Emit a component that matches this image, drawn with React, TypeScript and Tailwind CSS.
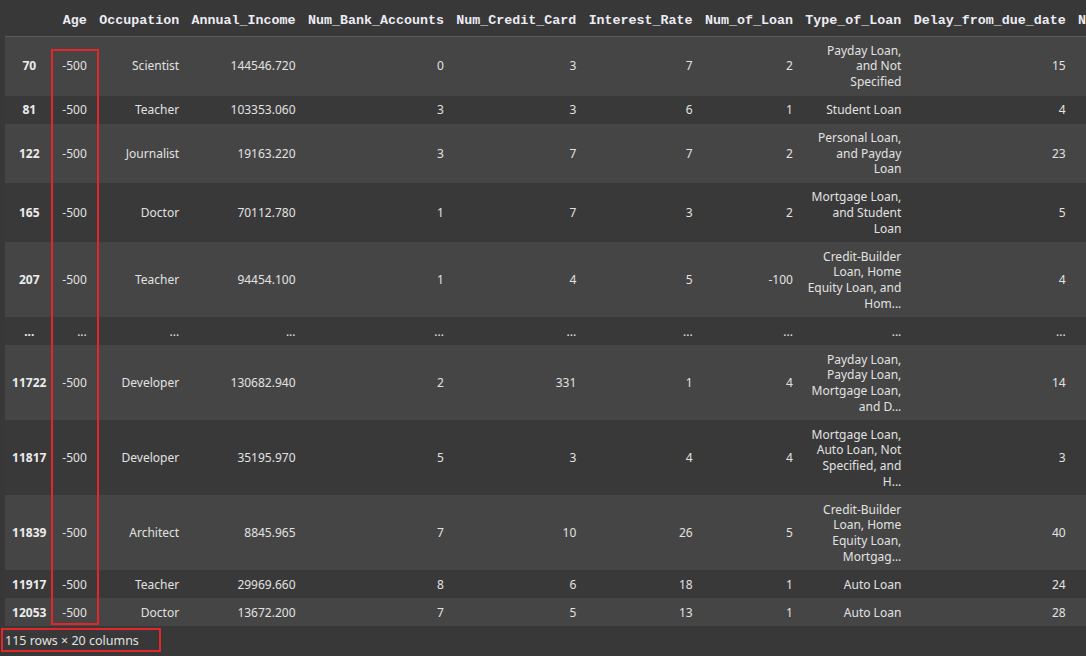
import React from "react";

type Row = {
  idx: string;
  age: string;
  occ: string;
  inc: string;
  bank: string;
  cc: string;
  rate: string;
  loans: string;
  type: string[];
  delay: string;
  ndp: string;
};

const rows: Row[] = [
  { idx: "70", age: "-500", occ: "Scientist", inc: "144546.720", bank: "0", cc: "3", rate: "7", loans: "2", type: ["Payday Loan,", "and Not", "Specified"], delay: "15", ndp: "11" },
  { idx: "81", age: "-500", occ: "Teacher", inc: "103353.060", bank: "3", cc: "3", rate: "6", loans: "1", type: ["Student Loan"], delay: "4", ndp: "1" },
  { idx: "122", age: "-500", occ: "Journalist", inc: "19163.220", bank: "3", cc: "7", rate: "7", loans: "2", type: ["Personal Loan,", "and Payday", "Loan"], delay: "23", ndp: "16" },
  { idx: "165", age: "-500", occ: "Doctor", inc: "70112.780", bank: "1", cc: "7", rate: "3", loans: "2", type: ["Mortgage Loan,", "and Student", "Loan"], delay: "5", ndp: "4" },
  { idx: "207", age: "-500", occ: "Teacher", inc: "94454.100", bank: "1", cc: "4", rate: "5", loans: "-100", type: ["Credit-Builder", "Loan, Home", "Equity Loan, and", "Hom..."], delay: "4", ndp: "6" },
  { idx: "...", age: "...", occ: "...", inc: "...", bank: "...", cc: "...", rate: "...", loans: "...", type: ["..."], delay: "...", ndp: "..." },
  { idx: "11722", age: "-500", occ: "Developer", inc: "130682.940", bank: "2", cc: "331", rate: "1", loans: "4", type: ["Payday Loan,", "Payday Loan,", "Mortgage Loan,", "and D..."], delay: "14", ndp: "9" },
  { idx: "11817", age: "-500", occ: "Developer", inc: "35195.970", bank: "5", cc: "3", rate: "4", loans: "4", type: ["Mortgage Loan,", "Auto Loan, Not", "Specified, and", "H..."], delay: "3", ndp: "8" },
  { idx: "11839", age: "-500", occ: "Architect", inc: "8845.965", bank: "7", cc: "10", rate: "26", loans: "5", type: ["Credit-Builder", "Loan, Home", "Equity Loan,", "Mortgag..."], delay: "40", ndp: "19" },
  { idx: "11917", age: "-500", occ: "Teacher", inc: "29969.660", bank: "8", cc: "6", rate: "18", loans: "1", type: ["Auto Loan"], delay: "24", ndp: "17" },
  { idx: "12053", age: "-500", occ: "Doctor", inc: "13672.200", bank: "7", cc: "5", rate: "13", loans: "1", type: ["Auto Loan"], delay: "28", ndp: "14" },
];

const headers = [
  "Age",
  "Occupation",
  "Annual_Income",
  "Num_Bank_Accounts",
  "Num_Credit_Card",
  "Interest_Rate",
  "Num_of_Loan",
  "Type_of_Loan",
  "Delay_from_due_date",
  "Num_of_Delayed_Payment",
];

const td =
  "px-[6.2px] py-[6.17px] leading-[15.67px] text-right align-middle whitespace-nowrap text-[12px] text-[#e2e2e2] font-normal";

export default function App() {
  return (
    <div className="relative w-[1086px] h-[656px] overflow-hidden bg-[#383838] font-['Noto_Sans',sans-serif]">
      <div className="pl-[5px]">
        <table className="border-collapse w-max">
          <thead>
            <tr className="border-b border-[#5c5c5c]">
              <th className="h-[36px] w-[48.5px] px-[6.2px]"></th>
              {headers.map((h, i) => (
                <th
                  key={h}
                  className={`h-[36px] px-[6.2px] pb-[6.5px] align-bottom text-right whitespace-nowrap font-bold text-[13.333px] leading-[16px] text-[#ececf4] font-['Liberation_Mono',monospace] ${
                    i === 0 ? "min-w-[39.5px]" : ""
                  }`}
                >
                  {h}
                </th>
              ))}
            </tr>
          </thead>
          <tbody>
            {rows.map((r, ri) => (
              <tr key={ri} className={ri % 2 === 0 ? "bg-[#454545]" : "bg-[#393939]"}>
                <th className="px-[6.2px] py-[6.17px] leading-[15.67px] text-center align-middle whitespace-nowrap text-[12px] font-bold text-[#ececec]">
                  {r.idx}
                </th>
                <td className={td}>{r.age}</td>
                <td className={td}>{r.occ}</td>
                <td className={td}>{r.inc}</td>
                <td className={td}>{r.bank}</td>
                <td className={td}>{r.cc}</td>
                <td className={td}>{r.rate}</td>
                <td className={td}>{r.loans}</td>
                <td className={td}>
                  {r.type.map((l, li) => (
                    <div key={li}>{l}</div>
                  ))}
                </td>
                <td className={td}>{r.delay}</td>
                <td className={td}>{r.ndp}</td>
              </tr>
            ))}
          </tbody>
        </table>
      </div>
      <div className="h-[29px] pt-[1px] flex items-center pl-[5px] text-[12.5px] text-[#e2e2e2]">
        115 rows × 20 columns
      </div>

      <div className="absolute left-[51px] top-[49px] w-[48px] h-[576px] border-2 border-[#e3262b]"></div>
      <div className="absolute left-[1px] top-[628px] w-[160px] h-[24px] border-2 border-[#e3262b]"></div>
    </div>
  );
}
